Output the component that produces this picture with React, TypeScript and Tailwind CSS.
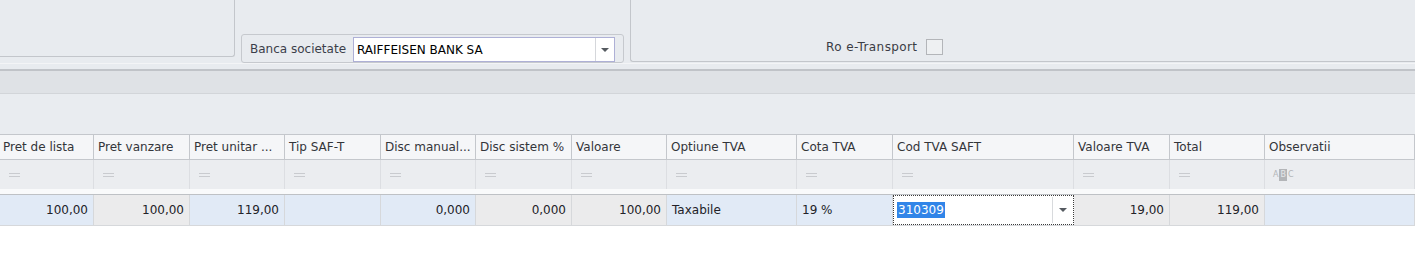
import React from "react";

type Col = {
  name: string;
  w: string;
  val: string;
  bg: string;
  right: boolean;
  editor?: boolean;
  abc?: boolean;
};

const cols: Col[] = [
  { name: "Pret de lista", w: "w-[94px]", val: "100,00", bg: "bg-[#e1eaf6]", right: true },
  { name: "Pret vanzare", w: "w-[96px]", val: "100,00", bg: "bg-[#ebebec]", right: true },
  { name: "Pret unitar ...", w: "w-[95px]", val: "119,00", bg: "bg-[#e1eaf6]", right: true },
  { name: "Tip SAF-T", w: "w-[96px]", val: "", bg: "bg-[#e1eaf6]", right: true },
  { name: "Disc manual...", w: "w-[95px]", val: "0,000", bg: "bg-[#e1eaf6]", right: true },
  { name: "Disc sistem %", w: "w-[96px]", val: "0,000", bg: "bg-[#ebebec]", right: true },
  { name: "Valoare", w: "w-[95px]", val: "100,00", bg: "bg-[#ebebec]", right: true },
  { name: "Optiune TVA", w: "w-[130px]", val: "Taxabile", bg: "bg-[#e1eaf6]", right: false },
  { name: "Cota TVA", w: "w-[96px]", val: "19 %", bg: "bg-[#e1eaf6]", right: false },
  { name: "Cod TVA SAFT", w: "w-[181px]", val: "310309", bg: "bg-white", right: false, editor: true },
  { name: "Valoare TVA", w: "w-[96px]", val: "19,00", bg: "bg-[#ebebec]", right: true },
  { name: "Total", w: "w-[95px]", val: "119,00", bg: "bg-[#ebebec]", right: true },
  { name: "Observatii", w: "flex-1", val: "", bg: "bg-[#e1eaf6]", right: false, abc: true },
];

function Arrow() {
  return (
    <svg width="8" height="4" viewBox="0 0 8 4">
      <path d="M0 0 L8 0 L4 4 Z" fill="#555a60" />
    </svg>
  );
}

function EqIcon() {
  return (
    <div className="flex flex-col gap-[2px] w-[11px] ml-[1px]">
      <div className="h-[1px] bg-[#c9cbcf]" />
      <div className="h-[1px] bg-[#c9cbcf]" />
    </div>
  );
}

function AbcIcon() {
  return (
    <div className="flex items-center gap-[1px] text-[8px] leading-none text-[#b3b5b8] font-['DejaVu_Sans',sans-serif]">
      <span>A</span>
      <span className="bg-[#b3b5b8] text-[#e6e7e9] px-[1px] py-[2px]">B</span>
      <span>C</span>
    </div>
  );
}

export default function App() {
  return (
    <div className="w-[1415px] h-[273px] bg-white overflow-hidden font-['DejaVu_Sans',sans-serif] text-[12px] text-[#2f2f33]">
      {/* Top area */}
      <div className="bg-[#e8ebef]">
        <div className="flex items-start h-[63px]">
          <div className="w-[235px] h-[57px] border-r border-b border-[#c3c6cb] rounded-br-[3px] shrink-0" />
          <div className="ml-[6px] mt-[34px] w-[383px] h-[29px] border border-[#c6c9ce] rounded-[3px] flex items-end pl-[8px] pr-[8px] shrink-0">
            <div className="h-[26px] flex items-center w-[103px] text-[#3b3e4a]">Banca societate</div>
            <div className="h-[25px] flex-1 bg-white border border-[#aeb0d6] flex items-center">
              <span className="pl-[3px] flex-1 text-black">RAIFFEISEN BANK SA</span>
              <div className="w-[19px] h-full border-l border-[#d5d7db] flex items-center justify-center">
                <Arrow />
              </div>
            </div>
          </div>
          <div className="ml-[6px] flex-1 h-[62px] border-l border-b border-[#c3c6cb] rounded-bl-[3px] flex items-end pb-[6px] pl-[195px]">
            <span className="text-[#3a3c44] h-[16px] leading-[16px] w-[92px] tracking-[0.4px] whitespace-nowrap">Ro e-Transport</span>
            <div className="ml-[8px] w-[17px] h-[16px] border border-[#b3b5b9] bg-[#eef0f2]" />
          </div>
        </div>
        <div className="h-[6px] border-t border-[#f3f4f6]" />
        <div className="h-[25px] border-t-2 border-b border-t-[#c0c3c8] border-b-[#d2d5d9] bg-[#dfe2e6]" />
        <div className="h-[40px] bg-[#e9ecf0]" />
      </div>

      {/* Grid */}
      <div className="flex h-[26px] border-t border-b border-[#c4c7cc] bg-[#f5f6f8]">
        {cols.map((c, i) => (
          <div
            key={c.name}
            className={`${c.w} shrink-0 h-full flex items-center border-r border-[#c4c7cc] ${i === 0 ? "pl-[3px]" : "pl-[4px]"} whitespace-nowrap overflow-hidden text-[#33353a]`}
          >
            {c.name}
          </div>
        ))}
      </div>
      <div className="flex h-[29px] bg-[#ebedf0]">
        {cols.map((c) => (
          <div key={c.name} className={`${c.w} shrink-0 h-full flex items-center border-r border-[#dcdee2] pl-[8px]`}>
            {c.abc ? <AbcIcon /> : <EqIcon />}
          </div>
        ))}
      </div>
      <div className="h-[6px] bg-[#f9fafb] border-b border-[#bec1c5]" />
      <div className="flex h-[31px] border-b border-[#d6d8db]">
        {cols.map((c) =>
          c.editor ? (
            <div key={c.name} className={`${c.w} shrink-0 h-full border border-dotted border-[#3a3a3a] bg-white flex items-center`}>
              <div className="flex-1 pl-[3px]">
                <span className="bg-[#3185e8] text-white px-[1px] leading-[16px] inline-block">{c.val}</span>
              </div>
              <div className="w-[20px] h-[26px] border-l border-[#d8dadd] flex items-center justify-center mr-[1px]">
                <Arrow />
              </div>
            </div>
          ) : (
            <div
              key={c.name}
              className={`${c.w} shrink-0 h-full ${c.bg} border-r border-[#d6d8db] flex items-center ${c.right ? "justify-end pr-[5px]" : "pl-[5px]"} text-[#222228]`}
            >
              {c.val}
            </div>
          )
        )}
      </div>
    </div>
  );
}
